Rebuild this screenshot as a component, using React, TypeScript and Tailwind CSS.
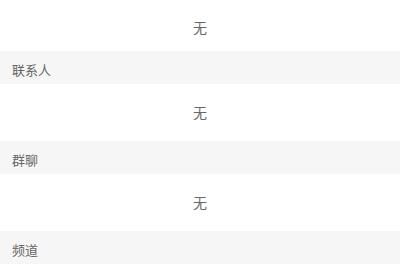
const SECTIONS = ["联系人", "群聊", "频道"];

function Empty({ first }: { first?: boolean }) {
  return (
    <div
      className={`flex items-center justify-center text-[14px] text-[#666] ${
        first ? "h-[51px] pt-[4px]" : "h-[57px]"
      }`}
    >
      无
    </div>
  );
}

export default function App() {
  return (
    <div
      className="w-[400px] h-[280px] overflow-hidden bg-white"
      style={{ fontFamily: '"Noto Sans CJK SC", "Noto Sans", sans-serif' }}
    >
      {SECTIONS.map((label, i) => (
        <div key={label}>
          <Empty first={i === 0} />
          <div className="h-[33px] bg-[#f6f6f6] pt-[11px] pl-[12px] text-[13px] leading-[16px] text-[#666]">
            {label}
          </div>
        </div>
      ))}
    </div>
  );
}
